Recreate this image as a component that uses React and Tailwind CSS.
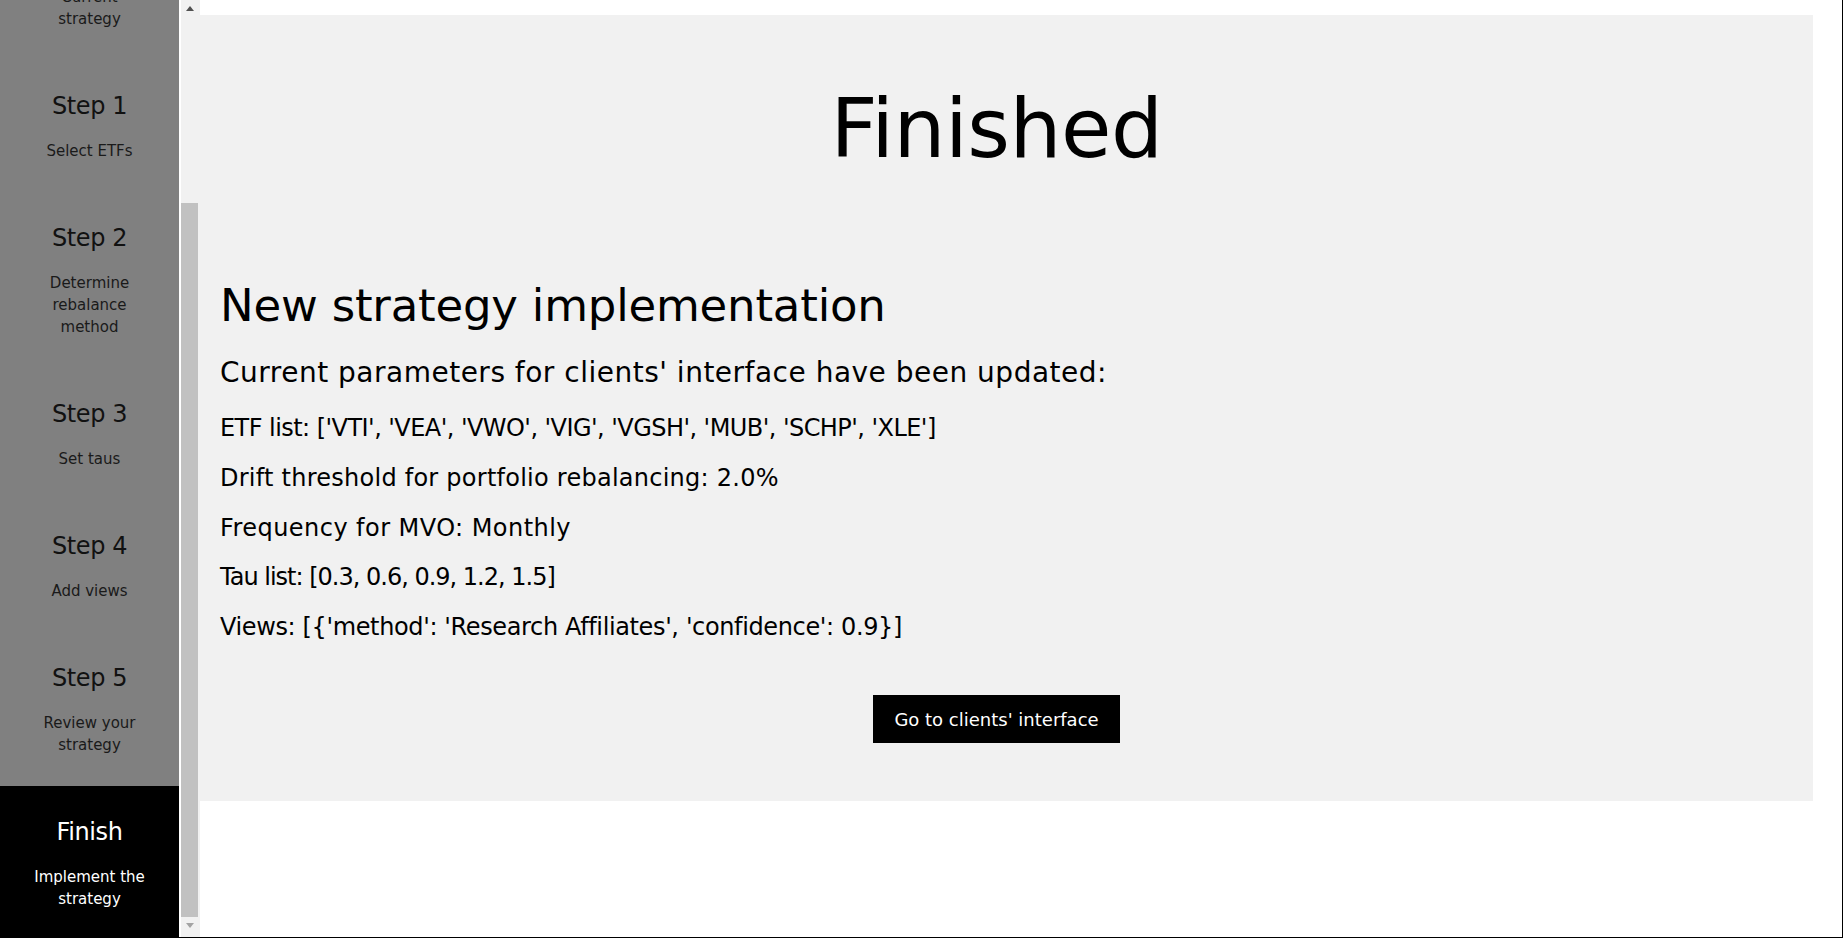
import React from "react";

const steps = [
  { t: "Start", d: ["Current", "strategy"] },
  { t: "Step 1", d: ["Select ETFs"] },
  { t: "Step 2", d: ["Determine", "rebalance", "method"] },
  { t: "Step 3", d: ["Set taus"] },
  { t: "Step 4", d: ["Add views"] },
  { t: "Step 5", d: ["Review your", "strategy"] },
  { t: "Finish", d: ["Implement the", "strategy"], active: true },
];

const params = [
  { text: "ETF list: ['VTI', 'VEA', 'VWO', 'VIG', 'VGSH', 'MUB', 'SCHP', 'XLE']", cls: "tracking-[-0.55px]" },
  { text: "Drift threshold for portfolio rebalancing: 2.0%", cls: "tracking-[0.25px]" },
  { text: "Frequency for MVO: Monthly", cls: "tracking-[0.45px]" },
  { text: "Tau list: [0.3, 0.6, 0.9, 1.2, 1.5]", cls: "tracking-[-1px]" },
  { text: "Views: [{'method': 'Research Affiliates', 'confidence': 0.9}]", cls: "tracking-[-0.37px]" },
];

function StepItem({ step, first }) {
  return (
    <div
      className={`pt-[32px] pb-[30px] text-center ${first ? "-mt-[94px]" : ""} ${
        step.active ? "bg-black text-white" : "text-[#111111]"
      }`}
    >
      <div className="text-[24px] leading-[29px] tracking-[-0.4px]">{step.t}</div>
      <div className={`mt-[19px] text-[15px] leading-[22px] ${step.active ? "text-white" : "text-[#1a1a1a]"}`}>
        {step.d.map((line, i) => (
          <div key={i}>{line}</div>
        ))}
      </div>
    </div>
  );
}

export default function App() {
  return (
    <div className="flex h-[938px] w-[1843px] overflow-hidden border-r border-b border-black bg-white font-['DejaVu_Sans',sans-serif] text-black">
      <aside className="flex w-[179px] flex-none flex-col overflow-hidden bg-[#808080]">
        {steps.map((s, i) => (
          <StepItem key={i} step={s} first={i === 0} />
        ))}
      </aside>
      <div className="ml-[2px] flex w-[19px] flex-none flex-col bg-[#f1f1f1]">
        <div className="flex h-[17px] w-[17px] items-center justify-center">
          <svg width="8" height="5" viewBox="0 0 8 5">
            <polygon points="0,5 8,5 4,0" fill="#505050" />
          </svg>
        </div>
        <div className="mt-[186px] h-[714px] w-[17px] bg-[#c1c1c1]" />
        <div className="flex h-[17px] w-[17px] items-center justify-center">
          <svg width="8" height="5" viewBox="0 0 8 5">
            <polygon points="0,0 8,0 4,5" fill="#a3a3a3" />
          </svg>
        </div>
      </div>
      <main className="flex-1 pt-[15px]">
        <div className="w-[1613px] bg-[#f1f1f1] pt-[64px] pr-[40px] pb-[58px] pl-[20px]">
          <h1 className="text-center text-[82px] leading-[100px] tracking-[-0.5px]">Finished</h1>
          <h2 className="mt-[99px] text-[45px] leading-[56px] tracking-[-0.2px]">New strategy implementation</h2>
          <h3 className="mt-[22px] text-[28px] leading-[34px] tracking-[0.5px]">
            Current parameters for clients' interface have been updated:
          </h3>
          <div className="mt-[23px] flex flex-col gap-[19.75px]">
            {params.map((p, i) => (
              <p key={i} className={`text-[24px] leading-[30px] ${p.cls}`}>
                {p.text}
              </p>
            ))}
          </div>
          <div className="mt-[53px] flex justify-center">
            <button className="h-[48px] bg-black px-[21px] text-[18px] text-white">
              Go to clients' interface
            </button>
          </div>
        </div>
      </main>
    </div>
  );
}
